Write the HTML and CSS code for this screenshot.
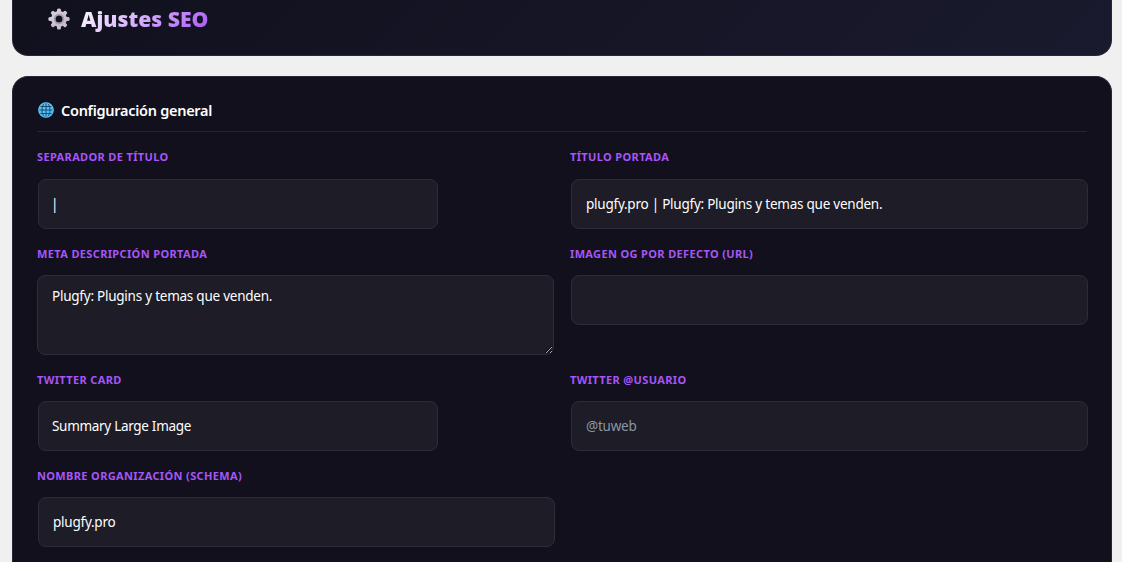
FILE: index.html
```html
<!DOCTYPE html>
<html lang="es">
<head>
    <meta charset="utf-8">
    <title>Ajustes SEO</title>
    <link rel="stylesheet" href="styles.css">
</head>
<body>
    <div class="wrap">
        <header class="header">
            <svg class="gear" viewBox="0 0 22 22">
                <defs>
                    <linearGradient id="metal" x1="0" y1="0" x2="1" y2="1">
                        <stop offset="0" stop-color="#d9d0dc"/>
                        <stop offset="1" stop-color="#c2b5cb"/>
                    </linearGradient>
                </defs>
                <g fill="url(#metal)">
                    <rect x="9" y="0.4" width="4" height="21.2" rx="1.5"/>
                    <rect x="0.4" y="9" width="21.2" height="4" rx="1.5"/>
                    <rect x="9" y="0.6" width="4" height="20.8" rx="1.5" transform="rotate(45 11 11)"/>
                    <rect x="9" y="0.6" width="4" height="20.8" rx="1.5" transform="rotate(-45 11 11)"/>
                    <circle cx="11" cy="11" r="7.9"/>
                </g>
                <circle cx="11" cy="11" r="4.5" fill="none" stroke="#a89db0" stroke-width="1.6"/>
                <circle cx="11" cy="11" r="3.5" fill="#12111f"/>
            </svg>
            <h1 class="title">Ajustes SEO</h1>
        </header>

        <section class="card">
            <h2 class="card-title">
                <svg class="globe" viewBox="0 0 16 16">
                    <circle cx="8" cy="8" r="7.5" fill="#55c0f8"/>
                    <g fill="none" stroke="#17435f" stroke-width="0.9">
                        <path d="M8 .5v15M.5 8h15M2 4.5h12M2 11.5h12"/>
                        <ellipse cx="8" cy="8" rx="4" ry="7.3"/>
                    </g>
                    <circle cx="8" cy="8" r="7.2" fill="none" stroke="#55c0f8" stroke-width="1.2"/>
                </svg>
                <span>Configuración general</span>
            </h2>

            <form class="grid">
                <div class="field first">
                    <label for="sep">Separador de título</label>
                    <input class="short separator" type="text" id="sep" value="|">
                </div>
                <div class="field first">
                    <label for="home-title">Título portada</label>
                    <input type="text" id="home-title" value="plugfy.pro | Plugfy: Plugins y temas que venden.">
                </div>
                <div class="field">
                    <label for="home-desc">Meta descripción portada</label>
                    <textarea id="home-desc">Plugfy: Plugins y temas que venden.</textarea>
                </div>
                <div class="field">
                    <label for="og">Imagen OG por defecto (URL)</label>
                    <input type="text" id="og">
                </div>
                <div class="field">
                    <label for="tw-card">Twitter Card</label>
                    <select class="short" id="tw-card">
                        <option>Summary Large Image</option>
                    </select>
                </div>
                <div class="field">
                    <label for="tw-user">Twitter @usuario</label>
                    <input type="text" id="tw-user" placeholder="@tuweb">
                </div>
                <div class="field">
                    <label for="org">Nombre organización (Schema)</label>
                    <input type="text" id="org" value="plugfy.pro">
                </div>
            </form>
        </section>
    </div>
</body>
</html>
```
FILE: styles.css
```css
* {
    box-sizing: border-box;
}
body {
    margin: 0;
    background: #f0f0f1;
    font-family: "Segoe UI", "Noto Sans", "Open Sans", sans-serif;
    color: #fff;
}
.wrap {
    margin: 0 10px 0 12px;
}
.header {
    display: flex;
    align-items: center;
    height: 56px;
    padding: 0 35px 17px;
    background: linear-gradient(135deg, #11101d, #1a1a2e);
    border: 1px solid #282733;
    border-top: 0;
    border-radius: 0 0 16px 16px;
}
.gear {
    width: 22px;
    height: 22px;
    margin-right: 11px;
}
.title {
    margin: 0;
    font-size: 21.2px;
    font-weight: 900;
    line-height: 30px;
    background: linear-gradient(135deg, #fff, #a855f7);
    -webkit-background-clip: text;
    background-clip: text;
    color: transparent;
}
.card {
    height: 486px;
    margin-top: 20px;
    padding: 24px 24px 0;
    background: #11101c;
    border: 1px solid #282733;
    border-bottom: 0;
    border-radius: 16px 16px 0 0;
}
.card-title {
    display: flex;
    align-items: center;
    height: 31px;
    margin: 0 0 16px;
    padding: 0 1px 13px;
    border-bottom: 1px solid #24232f;
    font-size: 14.5px;
    font-weight: 600;
    letter-spacing: -0.28px;
}
.globe {
    width: 16px;
    height: 16px;
    margin: 1px 7px 0 0;
}
.grid {
    display: grid;
    grid-template-columns: 1fr 1fr;
    gap: 16px;
}
.field {
    display: flex;
    flex-direction: column;
}
.field label {
    margin-bottom: 12px;
    font-size: 11px;
    font-weight: 700;
    line-height: 18px;
    letter-spacing: 0.36px;
    text-transform: uppercase;
    color: #a855f7;
}
.first label {
    margin-bottom: 13px;
}
.field input,
.field select,
.field textarea {
    width: 100%;
    padding: 12px 14px;
    background: #1d1c27;
    border: 1px solid #2d2c38;
    border-radius: 8px;
    color: #fff;
    font-family: inherit;
    font-size: 13.5px;
    letter-spacing: -0.24px;
    outline: none;
}
.field input,
.field select {
    height: 50px;
    margin: 0 0 0 1px;
    appearance: none;
}
.field .short {
    width: 400px;
}
.field select {
    padding-left: 13px;
    letter-spacing: -0.3px;
}
.field .separator {
    padding-left: 12px;
}
.field textarea {
    height: 80px;
    margin: 0;
    padding: 11px 14px;
    line-height: 19px;
    resize: vertical;
}
.field input::placeholder {
    color: #8c96a3;
}
```
